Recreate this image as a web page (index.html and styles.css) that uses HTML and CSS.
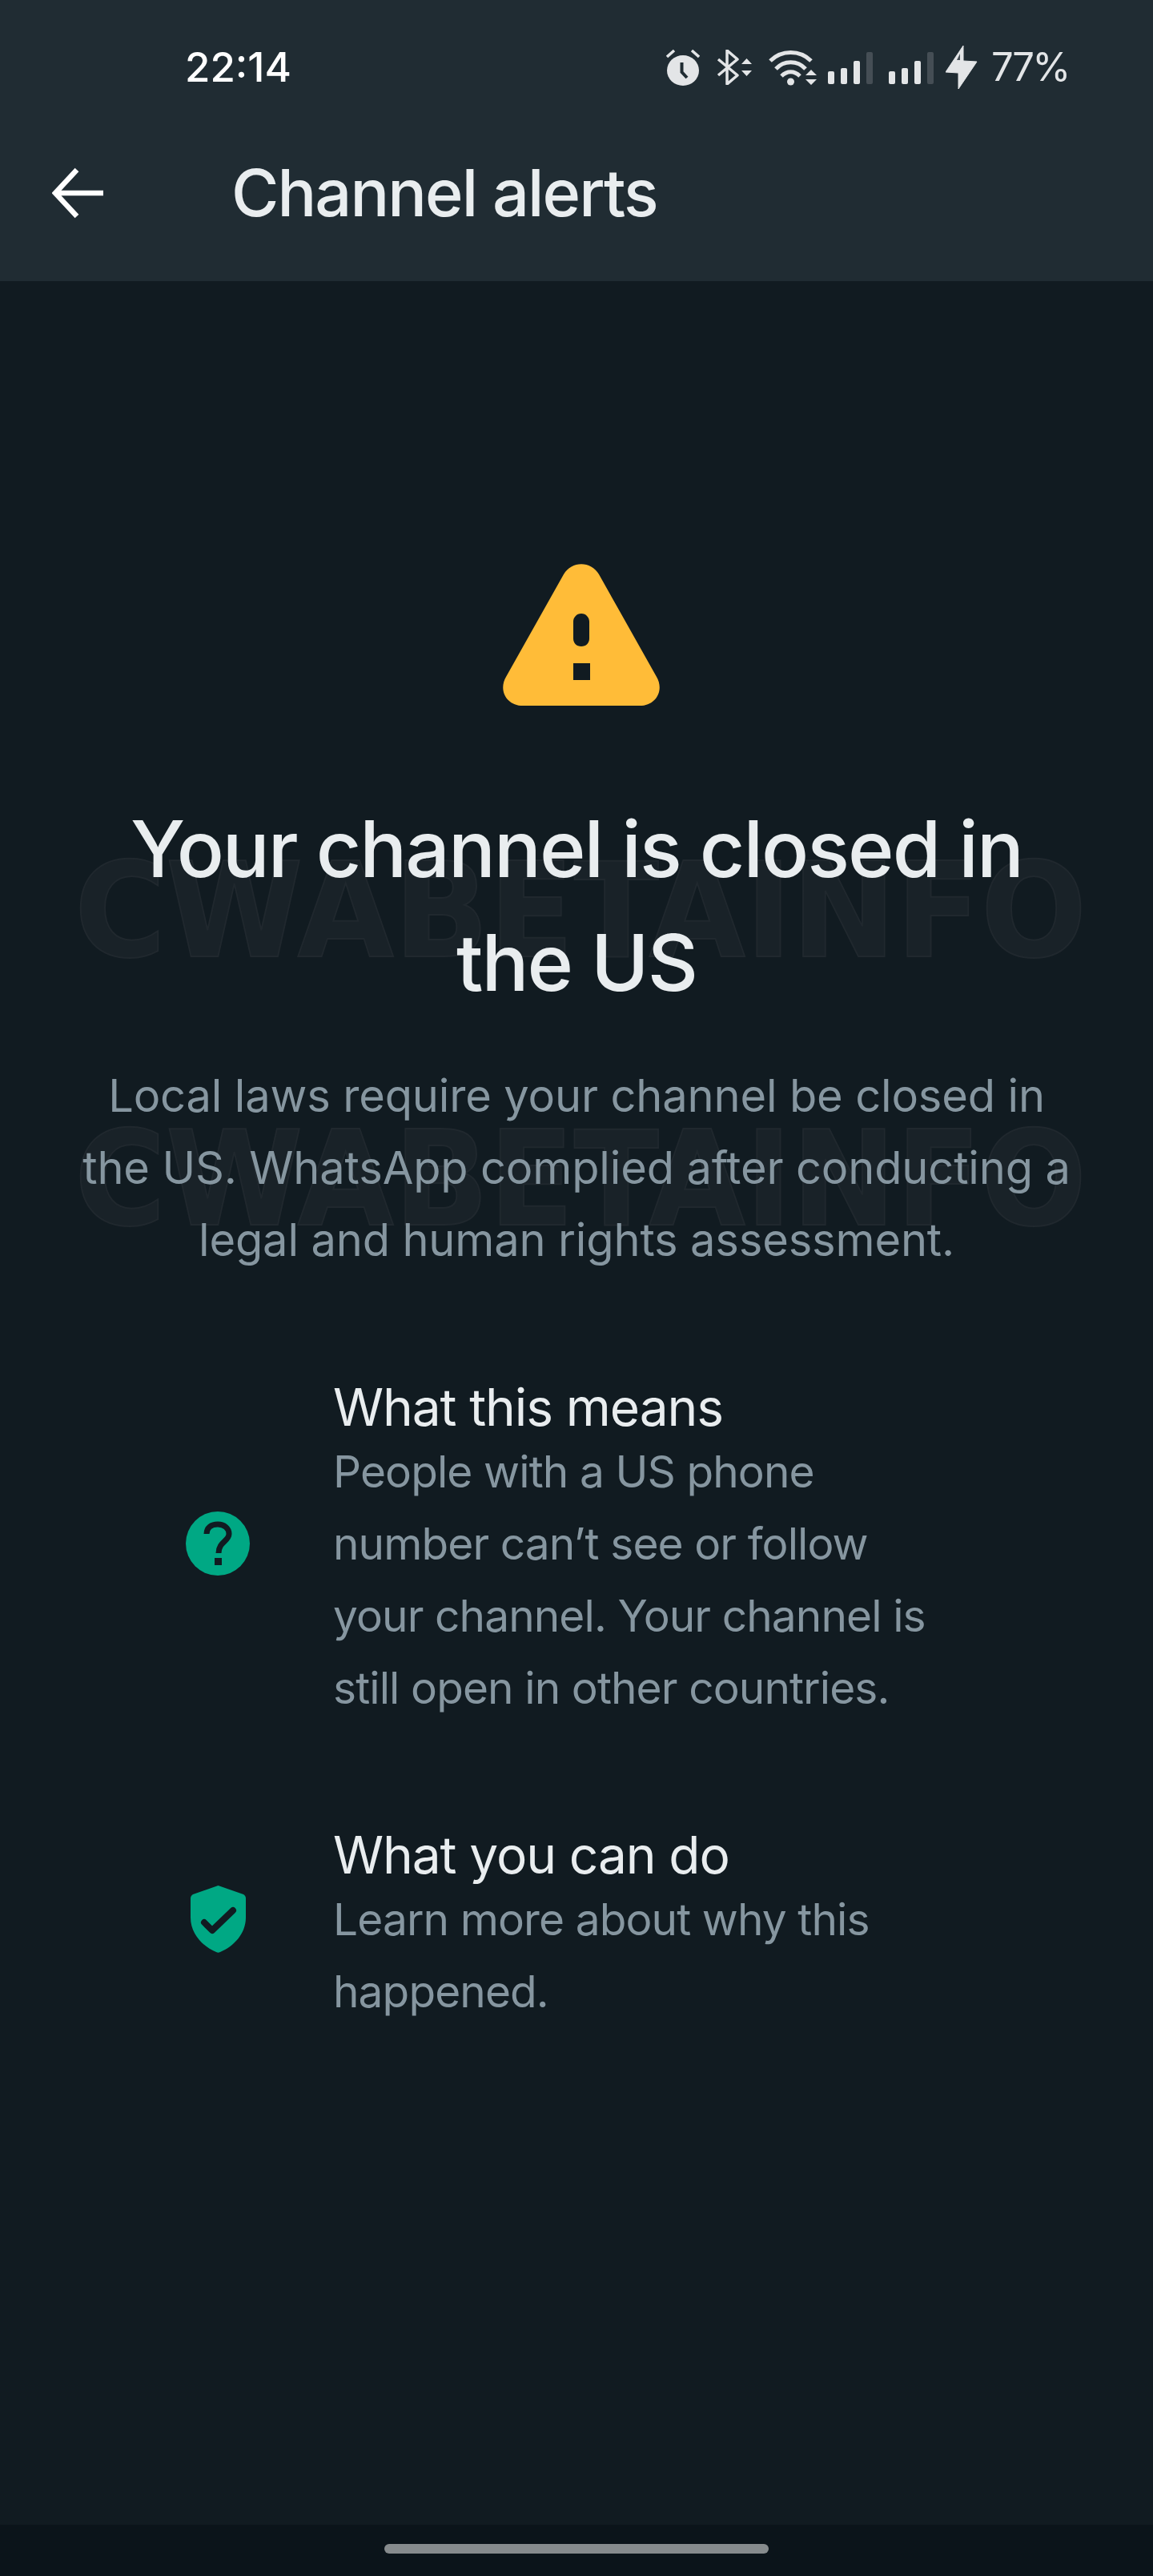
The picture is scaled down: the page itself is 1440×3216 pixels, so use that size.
FILE: index.html
```html
<!DOCTYPE html>
<html lang="en">
<head>
  <meta charset="UTF-8">
  <meta name="viewport" content="width=device-width, initial-scale=1.0">
  <title>Channel alerts</title>
  <link rel="stylesheet" href="styles.css">
</head>
<body>
  <header class="top">
    <div class="status-bar">
      <span class="clock">22:14</span>
      <div class="status-icons">
        <svg class="ic-alarm" width="42" height="46" viewBox="0 0 42 46">
          <path d="M1 10 10 2M41 10 32 2" stroke="#e3e5e7" stroke-width="3.5" fill="none"/>
          <ellipse cx="21" cy="27" rx="20" ry="19" fill="#e3e5e7"/>
          <path d="M19.5 17 V29 L26 36" stroke="#202c33" stroke-width="4" fill="none"/>
        </svg>
        <svg class="ic-bt" width="45" height="44" viewBox="0 0 45 44">
          <path d="M2 12 26 32 13 43V1L26 12 2 32" stroke="#e3e5e7" stroke-width="3.5" fill="none" stroke-linejoin="round"/>
          <path d="M31 18 37.5 11 44 18ZM31 26 37.5 33 44 26Z" fill="#e3e5e7"/>
        </svg>
        <svg class="ic-wifi" width="60" height="46" viewBox="0 0 60 46">
          <g stroke="#e3e5e7" stroke-width="5" fill="none">
            <path d="M2 15C16 1 39 1 53 15"/>
            <path d="M9 25C19 14 36 14 46 25"/>
            <path d="M16 34C23 27 32 27 39 34"/>
          </g>
          <circle cx="27.500" cy="41" r="4.500" fill="#e3e5e7"/>
          <path d="M46 33 53 26 60 33ZM46 38 53 45 60 38Z" fill="#e3e5e7"/>
        </svg>
        <svg class="ic-signal" width="58" height="40" viewBox="0 0 58 40">
          <rect x="1" y="24" width="8" height="16" rx="2" fill="#e3e5e7"/>
          <rect x="17" y="20" width="8" height="20" rx="2" fill="#e3e5e7"/>
          <rect x="33" y="11" width="8" height="29" rx="2" fill="#e3e5e7"/>
          <rect x="49" y="0" width="8" height="40" rx="2" fill="#454e55"/>
        </svg>
        <svg class="ic-signal" width="58" height="40" viewBox="0 0 58 40">
          <rect x="1" y="24" width="8" height="16" rx="2" fill="#e3e5e7"/>
          <rect x="17" y="20" width="8" height="20" rx="2" fill="#e3e5e7"/>
          <rect x="33" y="11" width="8" height="29" rx="2" fill="#e3e5e7"/>
          <rect x="49" y="0" width="8" height="40" rx="2" fill="#454e55"/>
        </svg>
        <svg class="ic-bolt" width="40" height="54" viewBox="0 0 40 54">
          <path d="M22 0 0 33 16 34V54L39 20 22 19Z" fill="#e3e5e7" stroke="#e3e5e7" stroke-width="1" stroke-linejoin="round"/>
          <path d="M18 10 14 18H18Z" fill="#454e55"/>
        </svg>
        <span class="battery">77%</span>
      </div>
    </div>
    <div class="app-bar">
      <svg class="back" width="64" height="64" viewBox="0 0 64 64">
        <path d="M31 3 4 32 31 61M4 32H64" stroke="#fff" stroke-width="6.500" fill="none"/>
      </svg>
      <h1 class="app-title">Channel alerts</h1>
    </div>
  </header>

  <main class="content">
    <div class="watermark wm-one" aria-hidden="true"><span>CWABETAINFO</span></div>
    <div class="watermark wm-two" aria-hidden="true"><span>CWABETAINFO</span></div>

    <svg class="warn" width="198" height="178" viewBox="0 0 198 178">
      <path fill-rule="evenodd" fill="#ffbc38" d="M77 14C87-3 111-3 121 14L193 142C203 159 192 178 172 178H26C6 178-5 159 5 142ZM99 63C93 63 89 68 89 73V94C89 100 93 104 99 104 105 104 109 100 109 94V73C109 68 105 63 99 63ZM89 125V146H110V125Z"/>
    </svg>
    <h2 class="headline">Your channel is closed in the US</h2>
    <p class="intro">Local laws require your channel be closed in the US. WhatsApp complied after conducting a legal and human rights assessment.</p>

    <section class="info-row">
      <div class="info-icon">
        <svg width="80" height="80" viewBox="0 0 80 80">
          <circle cx="40" cy="40" r="40" fill="#00a884"/>
          <path d="M26 28C26 20 32 16 40 16 48 16 54 21 54 28 54 37 41 38 41 52" stroke="#111b21" stroke-width="7" fill="none"/>
          <rect x="36" y="58" width="9" height="9" fill="#111b21"/>
        </svg>
      </div>
      <div class="info-text">
        <h3>What this means</h3>
        <p>People with a US phone number can’t see or follow your channel. Your channel is still open in other countries.</p>
      </div>
    </section>

    <section class="info-row">
      <div class="info-icon">
        <svg width="69" height="84" viewBox="0 0 69 84">
          <path d="M34.500 0 66 11C68 12 69 14 69 16V40C69 60 54 76 37 83 35 84 34 84 32 83 15 76 0 60 0 40V16C0 14 1 12 3 11Z" fill="#00a884"/>
          <path d="M17 46 27 56 53 31" stroke="#111b21" stroke-width="8" stroke-linecap="round" stroke-linejoin="round" fill="none"/>
        </svg>
      </div>
      <div class="info-text">
        <h3>What you can do</h3>
        <p>Learn more about why this happened.</p>
      </div>
    </section>
  </main>

  <footer class="nav-bar"><div class="pill"></div></footer>
</body>
</html>
```

FILE: styles.css
```css
* {
  box-sizing: border-box;
}
html, body {
  margin: 0;
  height: 3216px;
}
body {
  display: flex;
  flex-direction: column;
  font-family: Inter, "Liberation Sans", sans-serif;
  background-color: #111b21;
  overflow: hidden;
}

.top {
  background-color: #202c33;
  height: 351px;
}
.status-bar {
  height: 130px;
  padding: 37px 105px 0 231px;
  display: flex;
  align-items: center;
  justify-content: space-between;
}
.clock {
  color: #fff;
  font-size: 51px;
  font-weight: 500;
}
.status-icons {
  display: flex;
  align-items: center;
  color: #e3e5e7;
}
.ic-alarm { margin-right: 21px; }
.ic-bt { margin-right: 20px; }
.ic-wifi { margin-right: 13px; }
.ic-signal { margin-right: 18px; margin-top: 2px; }
.ic-signal + .ic-signal { margin-right: 14px; }
.ic-bolt { margin-right: 17px; }
.battery {
  font-size: 49px;
  letter-spacing: -2.500px;
}

.app-bar {
  height: 221px;
  display: flex;
  align-items: center;
  padding-left: 65px;
}
.back {
  margin-right: 160px;
}
.app-title {
  margin: 0;
  color: #e9edef;
  font-size: 81px;
  font-weight: 500;
  letter-spacing: -1.900px;
}

.content {
  position: relative;
  flex: 1;
  display: flex;
  flex-direction: column;
  align-items: center;
  padding-top: 352px;
}
.warn {
  display: block;
  margin: 0 0 108px 12px;
  position: relative;
}
.headline {
  position: relative;
  margin: 0 0 50px;
  padding: 0 100px;
  color: #e9edef;
  font-size: 98px;
  font-weight: 500;
  letter-spacing: -2px;
  line-height: 142px;
  text-align: center;
}
.intro {
  position: relative;
  margin: 0 0 129px;
  padding: 0 90px;
  color: #8696a0;
  font-size: 56px;
  letter-spacing: -0.150px;
  line-height: 90px;
  text-align: center;
}

.info-row {
  position: relative;
  align-self: stretch;
  display: flex;
  align-items: center;
  padding-left: 232px;
  margin-bottom: 129px;
}
.info-icon {
  width: 80px;
  margin-right: 104px;
  margin-bottom: 20px;
  display: flex;
  justify-content: center;
}
.info-icon svg {
  display: block;
}
.info-text {
  width: 745px;
}
.info-text h3 {
  margin: 0;
  color: #e9edef;
  font-size: 64px;
  font-weight: 400;
  letter-spacing: -1.100px;
  line-height: 70px;
}
.info-text p {
  margin: 0;
  color: #8696a0;
  font-size: 55px;
  letter-spacing: -0.900px;
  line-height: 90px;
}

/* faint site watermark behind the text */
.watermark {
  position: absolute;
  left: 93px;
  color: #192228;
  font-family: "DejaVu Sans", sans-serif;
  font-size: 164px;
  font-weight: 700;
  line-height: 120px;
  white-space: nowrap;
  -webkit-text-stroke: 2px #20282e;
}
.watermark span {
  display: inline-block;
  transform-origin: left center;
  transform: scaleX(0.948);
}
.wm-one { top: 727px; }
.wm-two { top: 1062px; }

.nav-bar {
  height: 64px;
  background-color: #0b141a;
  padding-top: 24px;
}
.pill {
  width: 480px;
  height: 12px;
  margin: 0 auto;
  border-radius: 6px;
  background-color: #868b8d;
}
```
